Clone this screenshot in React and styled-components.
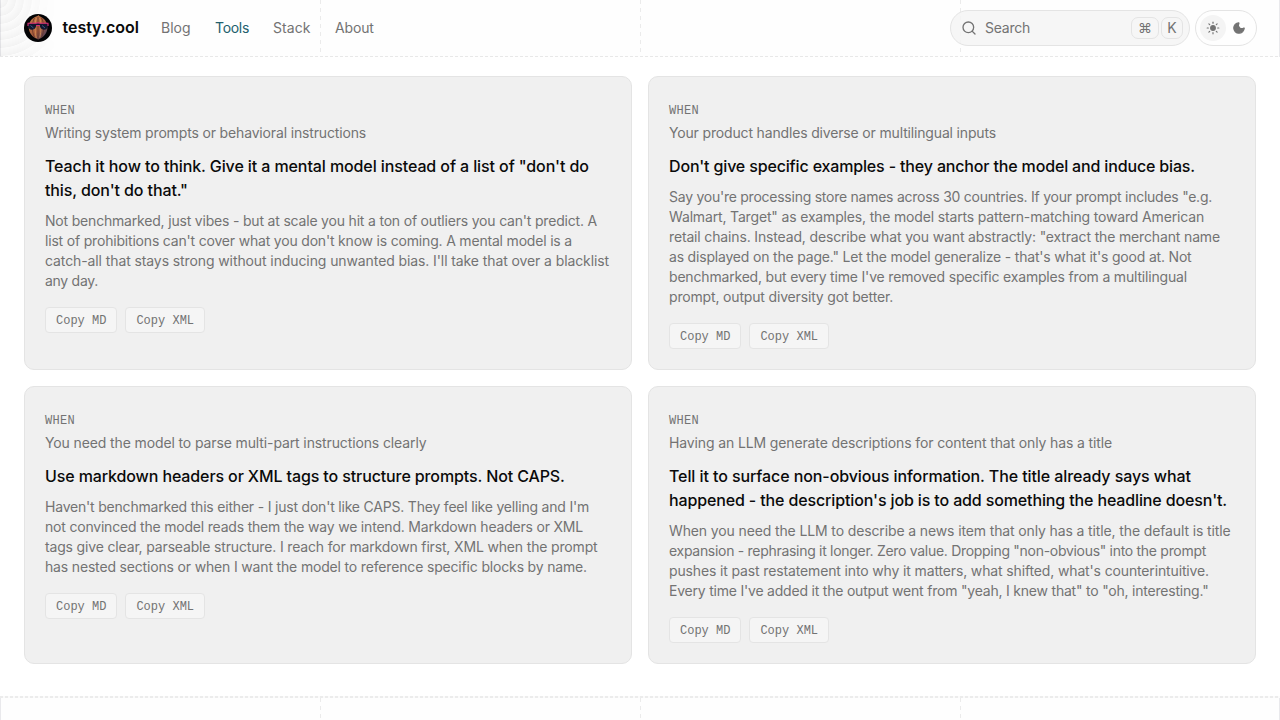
import styled, { createGlobalStyle } from "styled-components";
import { Moon, Search, Sun } from "lucide-react";

const NAV = [
  { label: "Blog", width: 54, spacing: -0.01 },
  { label: "Tools", width: 58, spacing: -0.3, active: true },
  { label: "Stack", width: 62, spacing: 0.05 },
  { label: "About", width: 63, spacing: -0.15 },
];

const TIPS = [
  {
    when: ["Writing system prompts or behavioral instructions", -0.156],
    title: [
      ['Teach it how to think. Give it a mental model instead of a list of "don\'t do', -0.1],
      ['this, don\'t do that."', -0.116],
    ],
    body: [
      ["Not benchmarked, just vibes - but at scale you hit a ton of outliers you can't predict. A", -0.191],
      ["list of prohibitions can't cover what you don't know is coming. A mental model is a", -0.189],
      ["catch-all that stays strong without inducing unwanted bias. I'll take that over a blacklist", -0.1],
      ["any day.", -0.281],
    ],
  },
  {
    when: ["Your product handles diverse or multilingual inputs", -0.161],
    title: [["Don't give specific examples - they anchor the model and induce bias.", -0.157]],
    body: [
      ['Say you\'re processing store names across 30 countries. If your prompt includes "e.g.', -0.25],
      ['Walmart, Target" as examples, the model starts pattern-matching toward American', -0.16],
      ['retail chains. Instead, describe what you want abstractly: "extract the merchant name', -0.152],
      ['as displayed on the page." Let the model generalize - that\'s what it\'s good at. Not', -0.19],
      ["benchmarked, but every time I've removed specific examples from a multilingual", -0.181],
      ["prompt, output diversity got better.", -0.165],
    ],
  },
  {
    when: ["You need the model to parse multi-part instructions clearly", -0.12],
    title: [["Use markdown headers or XML tags to structure prompts. Not CAPS.", -0.115]],
    body: [
      ["Haven't benchmarked this either - I just don't like CAPS. They feel like yelling and I'm", -0.201],
      ["not convinced the model reads them the way we intend. Markdown headers or XML", -0.199],
      ["tags give clear, parseable structure. I reach for markdown first, XML when the prompt", -0.161],
      ["has nested sections or when I want the model to reference specific blocks by name.", -0.167],
    ],
  },
  {
    when: ["Having an LLM generate descriptions for content that only has a title", -0.13],
    title: [
      ["Tell it to surface non-obvious information. The title already says what", -0.089],
      ["happened - the description's job is to add something the headline doesn't.", -0.135],
    ],
    body: [
      ["When you need the LLM to describe a news item that only has a title, the default is title", -0.127],
      ['expansion - rephrasing it longer. Zero value. Dropping "non-obvious" into the prompt', -0.295],
      ["pushes it past restatement into why it matters, what shifted, what's counterintuitive.", -0.14],
      ['Every time I\'ve added it the output went from "yeah, I knew that" to "oh, interesting."', -0.209],
    ],
  },
];

const Logo = () => (
  <LogoSvg viewBox="0 0 28 28">
    <defs>
      <linearGradient id="shell" x1="0" x2="1" y1="0" y2="1">
        <stop offset="0" stopColor="#c07a48" />
        <stop offset="0.55" stopColor="#a85c3c" />
        <stop offset="1" stopColor="#2f3560" />
      </linearGradient>
    </defs>
    <circle cx="14" cy="14" r="14" fill="#030305" />
    <path
      d="M14.5 1c.6 1.4 2.5 1.8 4.5 3.2 3 2.2 4.6 5.6 4.4 9.8-.2 5-3.400 9.200-9.200 11.500C8.400 23.200 5 19 4.800 14 4.600 9.800 6 6.400 9 4.200 11 2.800 13.500 2.400 14.500 1z"
      fill="url(#shell)"
    />
    <path
      d="M10.500 4C8 8 7.500 18 10.500 23.500M14 3v22M17.500 4c2.500 4 3 14 0 19.500"
      fill="none"
      stroke="#5c2e26"
      strokeWidth="0.7"
    />
    <path
      d="M12.300 4c-1.500 4-1.500 15 0 20M15.800 4c1.500 4 1.500 14 0 19.500"
      fill="none"
      stroke="#e09858"
      strokeWidth="0.7"
    />
    <path
      d="M4 9.500h8c1.300-.6 2.700-.6 4 0h8v2c0 2.600-1.700 4.200-4 4.200-2.600 0-4-1.700-4.300-4.400h-3.400C12 14 10.600 15.700 8 15.700c-2.300 0-4-1.600-4-4.200z"
      fill="#12162e"
    />
    <path
      d="M3.500 9.300h8.300c1.400-.5 3-.5 4.400 0h8.300M4 9.500V12M24 9.500V12M12.200 11.500h3.600"
      fill="none"
      stroke="#d62c78"
      strokeWidth="1.1"
    />
    <path d="M6.500 11.500l3 2.500M18 11.500l3 2.500" stroke="#3c5f8c" strokeWidth="0.9" />
  </LogoSvg>
);

const Line = ({ line }) => <TextLine $spacing={line[1]}>{line[0]}</TextLine>;

const TipCard = ({ tip }) => (
  <Card>
    <Label>WHEN</Label>
    <Trigger>
      <Line line={tip.when} />
    </Trigger>
    <Title>
      {tip.title.map((line) => (
        <Line key={line[0]} line={line} />
      ))}
    </Title>
    <Body>
      {tip.body.map((line) => (
        <Line key={line[0]} line={line} />
      ))}
    </Body>
    <Actions>
      <CopyButton>Copy MD</CopyButton>
      <CopyButton>Copy XML</CopyButton>
    </Actions>
  </Card>
);

export default function App() {
  return (
    <Page>
      <GlobalStyle />
      <Header>
        <Rings />
        <Logo />
        <Brand>testy.cool</Brand>
        <Nav>
          {NAV.map((item) => (
            <NavLink
              key={item.label}
              $width={item.width}
              $spacing={item.spacing}
              $active={item.active}
            >
              {item.label}
            </NavLink>
          ))}
        </Nav>
        <SearchBox>
          <Search size={16} />
          <SearchText>Search</SearchText>
          <Kbd $width={28}>⌘</Kbd>
          <Kbd $width={22}>K</Kbd>
        </SearchBox>
        <ThemeToggle>
          <ThemeOption $active>
            <Sun size={14} fill="currentColor" />
          </ThemeOption>
          <ThemeOption>
            <Moon size={14} fill="currentColor" />
          </ThemeOption>
        </ThemeToggle>
      </Header>
      <Grid>
        {TIPS.map((tip) => (
          <TipCard key={tip.when[0]} tip={tip} />
        ))}
      </Grid>
      <Footer />
    </Page>
  );
}

// style
const GlobalStyle = createGlobalStyle`
  * {
    box-sizing: border-box;
  }
  body {
    margin: 0;
    background: #fff;
    overflow: hidden;
  }
  h3, p {
    margin: 0;
  }
`;

const column = (x, height = "100%") =>
  `repeating-linear-gradient(#ebebeb 0 4px, transparent 4px 8px) ${x}px 0 / 1px ${height} no-repeat`;
const edge = (x) => `linear-gradient(#e9e9ec, #e9e9ec) ${x}px 0 / 1px 100% no-repeat`;
const guides = (height) =>
  [column(320, height), column(640, height), column(960, height), edge(0), edge(1279)].join(",");

const Page = styled.div`
  width: 1280px;
  height: 720px;
  display: flex;
  flex-direction: column;
  overflow: hidden;
  background: #fff;
  color: #737373;
  font-family: Inter, "Liberation Sans", sans-serif;
  font-size: 14px;
`;
const Header = styled.header`
  position: relative;
  height: 57px;
  flex: none;
  padding: 0 23px 1px 24px;
  display: flex;
  align-items: center;
  background:
    repeating-linear-gradient(90deg, #e8e8e8 0 3px, transparent 3px 5px) 0 56px / 100% 1px no-repeat,
    ${guides("52px")};
  background-color: #fefefe;
`;
const Rings = styled.div`
  position: absolute;
  left: 0;
  top: 0;
  width: 56px;
  height: 56px;
  background: repeating-radial-gradient(
    circle at 0 0,
    rgba(0, 0, 0, 0.01) 0,
    rgba(0, 0, 0, 0.045) 7.5px,
    rgba(0, 0, 0, 0.01) 8px
  );
  mask-image: linear-gradient(90deg, #000 30%, transparent);
`;
const LogoSvg = styled.svg`
  position: relative;
  width: 28px;
  height: 28px;
`;
const Brand = styled.span`
  width: 99px;
  padding: 0 0 2px 10.5px;
  color: #0a0a0a;
  font-size: 16px;
  font-weight: 600;
  letter-spacing: -0.03px;
`;
const Nav = styled.nav`
  display: flex;
  flex: 1;
  padding: 0 0 2px 10px;
`;
const NavLink = styled.a`
  width: ${({ $width }) => $width}px;
  letter-spacing: ${({ $spacing }) => $spacing}px;
  color: ${({ $active }) => ($active ? "#22606d" : "#737373")};
`;
const SearchBox = styled.div`
  width: 240px;
  height: 36px;
  padding: 0 6px 0 10px;
  display: flex;
  align-items: center;
  gap: 2px;
  border: 1px solid #e4e4e4;
  border-radius: 18px;
  background: rgba(244, 244, 244, 0.85);
`;
const SearchText = styled.span`
  flex: 1;
  padding: 0 0 2px 6px;
  letter-spacing: -0.24px;
`;
const Kbd = styled.kbd`
  width: ${({ $width }) => $width}px;
  height: 22px;
  padding-bottom: 1px;
  display: flex;
  align-items: center;
  justify-content: center;
  border: 1px solid #e4e4e4;
  border-radius: 7px;
  font: 14px/18px Inter, "DejaVu Sans", sans-serif;
`;
const ThemeToggle = styled.div`
  width: 62px;
  height: 36px;
  margin-left: 5px;
  padding: 4px;
  display: flex;
  align-items: center;
  border: 1px solid #e4e4e4;
  border-radius: 18px;
`;
const ThemeOption = styled.span`
  width: 26px;
  height: 26px;
  display: flex;
  align-items: center;
  justify-content: center;
  border-radius: 50%;
  background: ${({ $active }) => ($active ? "#f4f4f4" : "transparent")};
`;
const Grid = styled.main`
  display: grid;
  grid-template-columns: 608px 608px;
  gap: 16px;
  padding: 19px 24px 32px;
`;
const Card = styled.article`
  padding: 20px;
  border: 1px solid #e4e4e4;
  border-radius: 10px;
  background: #f0f0f0;
`;
const Label = styled.div`
  height: 26px;
  font: 12px/28px "Liberation Mono", monospace;
  letter-spacing: 0.3px;
`;
const TextLine = styled.span`
  display: block;
  white-space: nowrap;
  letter-spacing: ${({ $spacing }) => $spacing}px;
`;
const Trigger = styled.p`
  line-height: 20px;
`;
const Title = styled.h3`
  margin: 11px 0 9px;
  color: #0a0a0a;
  font-size: 16px;
  font-weight: 500;
  line-height: 24px;
`;
const Body = styled.p`
  line-height: 20px;
`;
const Actions = styled.div`
  display: flex;
  gap: 8px;
  margin-top: 16px;
`;
const CopyButton = styled.button`
  height: 26px;
  padding: 2px 10px 0;
  border: 1px solid #e4e4e4;
  border-radius: 4px;
  background: #f5f5f5;
  color: #737373;
  font: 12px/16px "Liberation Mono", monospace;
`;
const Footer = styled.footer`
  flex: 1;
  padding-top: 2px;
  background:
    repeating-linear-gradient(90deg, #ececec 0 3px, #fbfbfb 3px 5px) 0 0 / 100% 2px no-repeat,
    ${guides()};
  background-origin: border-box, content-box, content-box, content-box, content-box, content-box;
  background-color: #fefefe;
`;
